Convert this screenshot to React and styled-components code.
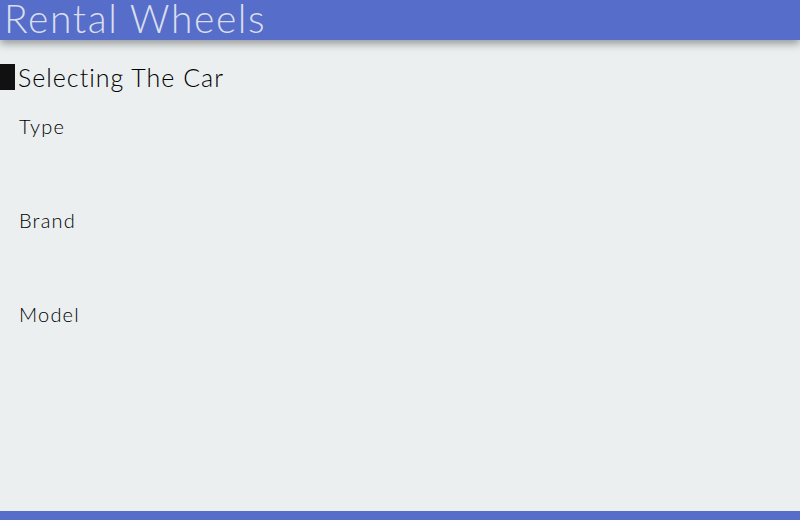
import React from 'react'
import styled, { createGlobalStyle } from 'styled-components'

const Global = createGlobalStyle`
body{
    margin:0;
    background:#ebeff0;
    font-family:Lato,"Open Sans",sans-serif;
}
`

function App() {
    return (
        <Page>
            <Global />
            <Header>
                <Title>Rental Wheels</Title>
            </Header>
            <Main>
                <SectionTitle>Selecting The Car</SectionTitle>
                <Field>Type</Field>
                <Field>Brand</Field>
                <Field>Model</Field>
            </Main>
            <Footer />
        </Page>
    )
}

const Page = styled.div`
min-height:100vh;
display:flex;
flex-direction:column;
`
const Header = styled.header`
height:40px;
background:#566dc9;
box-shadow:0 4px 8px rgba(0,0,0,0.35);
position:relative;
z-index:1;
`
const Title = styled.h1`
margin:0;
padding-left:4px;
font-size:39px;
font-weight:300;
line-height:36px;
color:#d9deec;
letter-spacing:1.6px;
white-space:nowrap;
`
const Main = styled.main`
flex:1;
padding-top:24px;
`
const SectionTitle = styled.h2`
margin:0;
height:26px;
border-left:15px solid #111;
padding-left:3px;
font-size:25px;
font-weight:300;
line-height:26px;
color:#000;
letter-spacing:1px;
`
const Field = styled.div`
margin:24px 0 0 19px;
height:70px;
font-size:20px;
font-weight:300;
line-height:24px;
color:#000;
letter-spacing:1.2px;
`
const Footer = styled.footer`
height:9px;
background:#566dc9;
`

export default App
